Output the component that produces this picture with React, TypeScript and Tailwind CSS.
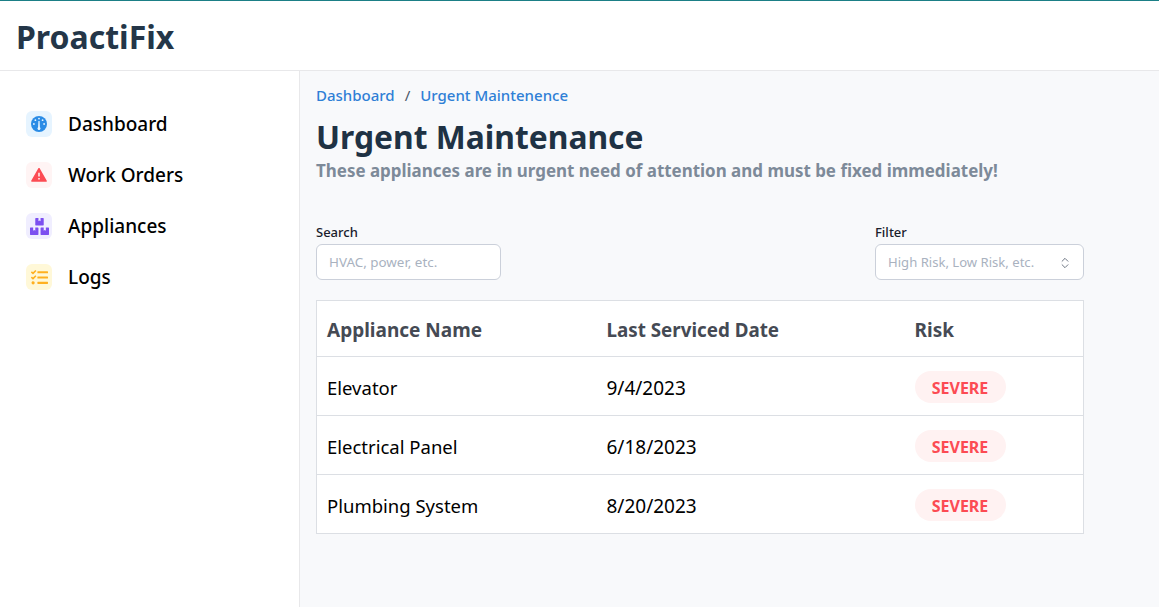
import React from "react";
import { ChevronsUpDown } from "lucide-react";
import { FaBoxes, FaTasks } from "react-icons/fa";
import { RiAlertFill } from "react-icons/ri";

const GaugeIcon = ({ className }: { className?: string }) => (
  <svg viewBox="0 0 16 16" className={className} fill="currentColor">
    <circle cx="8" cy="8" r="8" />
    <g fill="#e6f4ff">
      <circle cx="8" cy="2.6" r="0.9" />
      <circle cx="4.4" cy="4.2" r="0.9" />
      <circle cx="11.6" cy="4.2" r="0.9" />
      <circle cx="2.9" cy="8" r="0.9" />
      <circle cx="13.1" cy="8" r="0.9" />
      <path d="M7.4 5h1.2l.3 6.2a1.5 1.5 0 1 1-1.8 0z" />
    </g>
  </svg>
);

const navItems = [
  { label: "Dashboard", icon: GaugeIcon, size: "h-4 w-4", box: "bg-[#e6f4ff]", color: "text-[#2b8ce6]" },
  { label: "Work Orders", icon: RiAlertFill, size: "h-[18px] w-[18px]", box: "bg-[#fff4f4]", color: "text-[#fc4b53]" },
  { label: "Appliances", icon: FaBoxes, size: "h-[19px] w-[19px]", box: "bg-[#f0eeff]", color: "text-[#7c4ff0]" },
  { label: "Logs", icon: FaTasks, size: "h-[17px] w-[17px]", box: "bg-[#fff8d8]", color: "text-[#ffb01f]" },
];

const rows = [
  { name: "Elevator", date: "9/4/2023" },
  { name: "Electrical Panel", date: "6/18/2023" },
  { name: "Plumbing System", date: "8/20/2023" },
];

export default function App() {
  return (
    <div className="flex h-[607px] w-[1159px] flex-col overflow-hidden bg-white font-['Noto_Sans',sans-serif]">
      <header className="flex h-[71px] shrink-0 items-center border-t border-b border-t-[#1b7f86] border-b-[#e8e8ea] pt-[2px] pl-4">
        <h1 className="text-[32px] leading-none font-bold text-[#243648]">ProactiFix</h1>
      </header>

      <div className="flex min-h-0 flex-1">
        <aside className="flex w-[300px] shrink-0 flex-col gap-[25px] border-r border-[#e8e8ea] pt-[40px] pl-[26px]">
          {navItems.map((item) => (
            <div key={item.label} className="flex h-[26px] items-center gap-4">
              <span className={`flex h-[26px] w-[26px] items-center justify-center rounded-md ${item.box}`}>
                <item.icon className={`${item.size} ${item.color}`} />
              </span>
              <span className="text-[19px] leading-none font-medium text-black">{item.label}</span>
            </div>
          ))}
        </aside>

        <main className="flex-1 bg-[#f8f9fb] pt-[14px] pl-4">
          <nav className="flex h-5 items-center gap-[10px] text-[15px] leading-none font-medium text-[#2f7fd6]">
            <span>Dashboard</span>
            <span className="font-normal text-[#4a5568]">/</span>
            <span>Urgent Maintenence</span>
          </nav>

          <h2 className="mt-[12px] text-[31.8px] leading-[40px] font-bold text-[#1f3244]">Urgent Maintenance</h2>
          <p className="pt-px text-[16.95px] leading-[26px] font-bold text-[#7d8a99]">
            These appliances are in urgent need of attention and must be fixed immediately!
          </p>

          <div className="mt-[39px] flex w-[768px] justify-between">
            <label className="block w-[185px]">
              <span className="block text-[13px] leading-[18px] font-medium text-[#1a202c]">Search</span>
              <div className="mt-[3px] flex h-9 items-center rounded-md border border-[#cbd0da] bg-white pt-px pl-3 text-[13.4px] text-[#a9b2bf]">
                HVAC, power, etc.
              </div>
            </label>
            <label className="block w-[209px]">
              <span className="block text-[13px] leading-[18px] font-medium text-[#1a202c]">Filter</span>
              <div className="mt-[3px] flex h-9 items-center justify-between rounded-md border border-[#cbd0da] bg-white pt-px pr-[11px] pl-3 text-[13.1px] text-[#a9b2bf]">
                High Risk, Low Risk, etc.
                <ChevronsUpDown className="h-3.5 w-3.5 text-[#5a6472]" strokeWidth={1.5} />
              </div>
            </label>
          </div>

          <table className="mt-5 w-[768px] table-fixed border border-[#dcdfe4] bg-white text-left">
            <thead>
              <tr className="h-[56px] text-[19px] text-[#454a54]">
                <th className="w-[280px] pt-[3px] pl-[10px] font-bold">Appliance Name</th>
                <th className="w-[308px] pt-[3px] pl-[10px] text-[18.8px] font-bold">Last Serviced Date</th>
                <th className="pt-[3px] pl-[10px] font-bold">Risk</th>
              </tr>
            </thead>
            <tbody>
              {rows.map((row) => (
                <tr key={row.name} className="h-[59px] border-t border-[#dcdfe4] text-[18.5px] text-black">
                  <td className="pt-[3px] pl-[10px]">{row.name}</td>
                  <td className="pt-[5px] pl-[10px] text-[19px]">{row.date}</td>
                  <td className="pt-[2px] pl-[10px]">
                    <span className="inline-flex h-8 w-[91px] items-center justify-center rounded-full bg-[#fff2f2] pt-[2px] text-[16px] font-bold text-[#fc4b53]">
                      SEVERE
                    </span>
                  </td>
                </tr>
              ))}
            </tbody>
          </table>
        </main>
      </div>
    </div>
  );
}
